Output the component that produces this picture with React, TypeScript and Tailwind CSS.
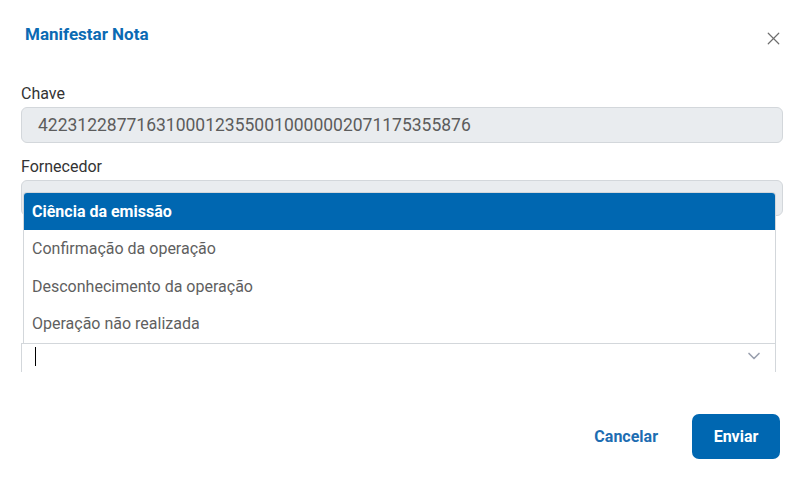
import { X, ChevronDown } from "lucide-react";

const options = [
  "Ciência da emissão",
  "Confirmação da operação",
  "Desconhecimento da operação",
  "Operação não realizada",
];

export default function App() {
  return (
    <div className="flex h-[481px] w-[805px] flex-col bg-white font-['Roboto',sans-serif]">
      <header className="flex h-[44px] items-start justify-between pl-[25px] pr-[21px] pt-[23px]">
        <h2 className="text-[17px] font-bold leading-[22px] text-[#0b6ab3]">Manifestar Nota</h2>
        <button type="button" className="mt-[5px] text-[#6e6e6e]" aria-label="Fechar">
          <X className="h-[21px] w-[21px]" strokeWidth={1.4} />
        </button>
      </header>

      <div className="relative h-[328px] overflow-hidden pl-[21px] pr-[22px] pt-[40px]">
        <label className="block text-[16px] leading-5 text-[#333]">Chave</label>
        <div className="mt-[3px] flex h-[36px] items-center rounded-[6px] border border-[#d3d7db] bg-[#e9ecef] pl-[16px] text-[17.5px] text-[#5c5c5c]">
          42231228771631000123550010000002071175355876
        </div>

        <label className="mt-[14px] block text-[16px] leading-5 text-[#333]">Fornecedor</label>
        <div className="mt-[3px] h-[36px] rounded-[6px] border border-[#d3d7db] bg-[#e9ecef]" />

        <div className="relative mt-[127px] w-[755px]">
          <ul className="absolute bottom-full left-[2px] right-0 z-10 overflow-hidden rounded-t-[4px] border-x border-t border-[#d3d7db] bg-white text-[16px]">
            {options.map((opt, i) => (
              <li
                key={opt}
                className={
                  i === 0
                    ? "flex h-[37px] items-center bg-[#0067b1] pl-[8px] font-bold text-white"
                    : i % 2 === 1
                      ? "flex h-[38px] items-center pl-[8px] text-[#5f5f5f]"
                      : "flex h-[37px] items-center pl-[8px] text-[#5f5f5f]"
                }
              >
                {opt}
              </li>
            ))}
          </ul>
          <div className="flex h-[38px] items-start justify-between border border-[#d3d7db] bg-white">
            <span className="ml-[13px] mt-[3px] h-[19px] w-px bg-black" />
            <ChevronDown className="mr-[11px] mt-[2px] h-[20px] w-[20px] text-[#9aa0ae]" strokeWidth={2} />
          </div>
        </div>
      </div>

      <footer className="flex items-center justify-end gap-[34px] pr-[25px] pt-[42px]">
        <button type="button" className="text-[16px] font-bold text-[#1d6db2]">
          Cancelar
        </button>
        <button
          type="button"
          className="h-[45px] w-[88px] rounded-[7px] bg-[#0067b1] text-[16px] font-bold text-white"
        >
          Enviar
        </button>
      </footer>
    </div>
  );
}
